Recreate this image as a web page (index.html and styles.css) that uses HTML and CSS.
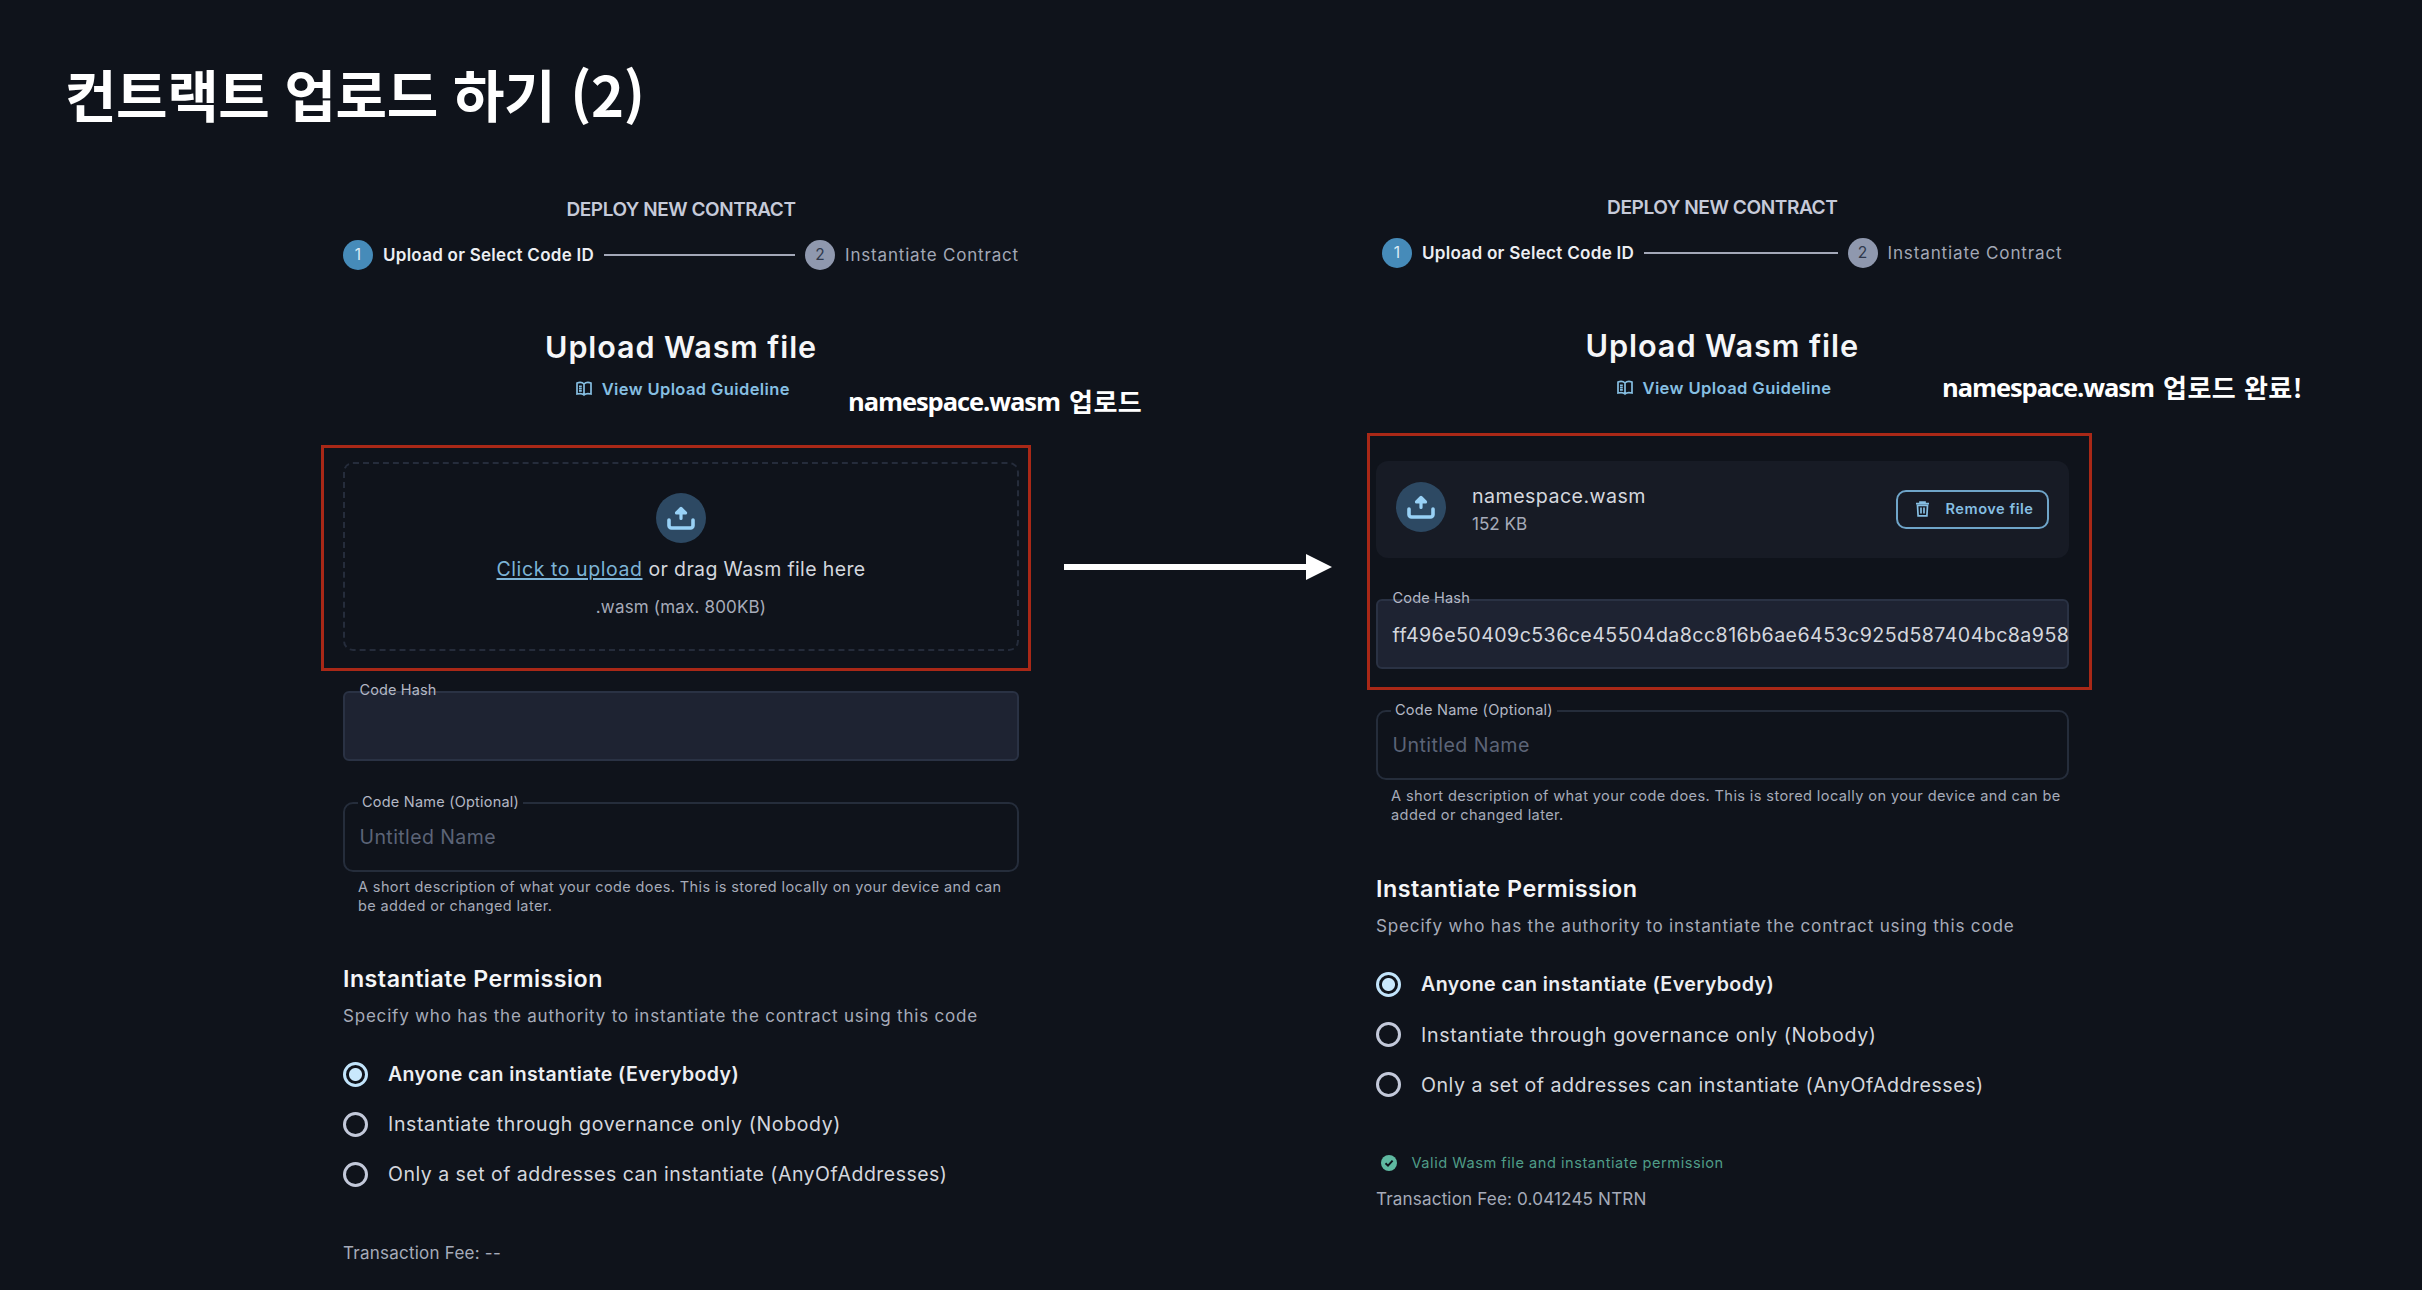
FILE: index.html
```
<!DOCTYPE html>
<html lang="ko">
<head>
<meta charset="utf-8">
<title>컨트랙트 업로드 하기 (2)</title>
<link rel="stylesheet" href="styles.css">
</head>
<body>
<svg width="0" height="0" class="sprite">
  <symbol id="upload" viewBox="0 0 28 24">
    <path d="M2 14v5.500a2.500 2.500 0 0 0 2.500 2.500h19a2.500 2.500 0 0 0 2.500-2.500V14" fill="none" stroke="currentColor" stroke-width="3.600" stroke-linecap="round" stroke-linejoin="round"/>
    <path d="M14 12.500V5M9.500 7 14 2.500 18.500 7z" fill="currentColor" stroke="currentColor" stroke-width="3.200" stroke-linecap="round" stroke-linejoin="round"/>
  </symbol>
  <symbol id="book" viewBox="0 0 16 16">
    <path d="M8 3C6.500 1.500 3.500 1.200 1 2v11c2.500-.7 5.500-.5 7 1 1.500-1.500 4.500-1.700 7-1V2c-2.500-.8-5.500-.5-7 1zM8 3v11M3 5.300h2.800M3 7.600h2.800M3 9.900h2.800" fill="none" stroke="currentColor" stroke-width="1.700"/>
  </symbol>
  <symbol id="trash" viewBox="0 0 14 16">
    <path d="M.5 2.700h13M4.500 2V1h5v1M2 4.500l.6 10.300h8.800L12 4.500zM5.500 6.500v6M8.500 6.500v6" fill="none" stroke="currentColor" stroke-width="1.700"/>
  </symbol>
  <symbol id="check" viewBox="0 0 16 16">
    <circle cx="8" cy="8" r="8" fill="currentColor"/>
    <path d="M4.500 8.300 7 10.700l4.600-5" fill="none" stroke="#0f131b" stroke-width="1.900"/>
  </symbol>
</svg>

<main class="slide">
  <h1 class="slide-title">컨트랙트 업로드 하기 (2)</h1>

  <div class="panels">
    <section class="panel">
      <div class="deploy">DEPLOY NEW CONTRACT</div>
      <div class="stepper">
        <span class="num num-on">1</span><span class="step step-on">Upload or Select Code ID</span>
        <span class="rule"></span>
        <span class="num">2</span><span class="step">Instantiate Contract</span>
      </div>
      <h2 class="heading">Upload Wasm file</h2>
      <div class="guide"><svg class="guide-icon"><use href="#book"/></svg><span class="guide-text">View Upload Guideline</span></div>

      <div class="dropzone">
        <span class="disc"><svg class="disc-icon"><use href="#upload"/></svg></span>
        <div class="drop-line"><a class="click">Click to upload</a><span class="drag">or drag Wasm file here</span></div>
        <div class="limit">.wasm (max. 800KB)</div>
      </div>

      <div class="field field-hash"><span class="label label-hash">Code Hash</span></div>
      <div class="field field-name"><span class="label label-name">Code Name (Optional)</span><span class="placeholder">Untitled Name</span></div>
      <p class="helper">A short description of what your code does. This is stored locally on your device and can<br>be added or changed later.</p>

      <h3 class="permission">Instantiate Permission</h3>
      <div class="specify">Specify who has the authority to instantiate the contract using this code</div>
      <div class="options">
        <div class="option"><span class="radio radio-on"></span><span class="opt opt-a">Anyone can instantiate (Everybody)</span></div>
        <div class="option"><span class="radio"></span><span class="opt opt-b">Instantiate through governance only (Nobody)</span></div>
        <div class="option"><span class="radio"></span><span class="opt opt-c">Only a set of addresses can instantiate (AnyOfAddresses)</span></div>
      </div>
      <div class="fee">Transaction Fee: --</div>
    </section>

    <section class="panel panel-done">
      <div class="deploy">DEPLOY NEW CONTRACT</div>
      <div class="stepper">
        <span class="num num-on">1</span><span class="step step-on">Upload or Select Code ID</span>
        <span class="rule"></span>
        <span class="num">2</span><span class="step">Instantiate Contract</span>
      </div>
      <h2 class="heading">Upload Wasm file</h2>
      <div class="guide"><svg class="guide-icon"><use href="#book"/></svg><span class="guide-text">View Upload Guideline</span></div>

      <div class="file">
        <span class="disc"><svg class="disc-icon"><use href="#upload"/></svg></span>
        <div class="file-info"><div class="file-name">namespace.wasm</div><div class="file-size">152 KB</div></div>
        <div class="remove"><svg class="remove-icon"><use href="#trash"/></svg><span class="remove-text">Remove file</span></div>
      </div>

      <div class="field field-hash"><span class="label label-hash">Code Hash</span><span class="hash">ff496e50409c536ce45504da8cc816b6ae6453c925d587404bc8a958</span></div>
      <div class="field field-name"><span class="label label-name">Code Name (Optional)</span><span class="placeholder">Untitled Name</span></div>
      <p class="helper">A short description of what your code does. This is stored locally on your device and can be<br>added or changed later.</p>

      <h3 class="permission">Instantiate Permission</h3>
      <div class="specify">Specify who has the authority to instantiate the contract using this code</div>
      <div class="options">
        <div class="option"><span class="radio radio-on"></span><span class="opt opt-a">Anyone can instantiate (Everybody)</span></div>
        <div class="option"><span class="radio"></span><span class="opt opt-b">Instantiate through governance only (Nobody)</span></div>
        <div class="option"><span class="radio"></span><span class="opt opt-c">Only a set of addresses can instantiate (AnyOfAddresses)</span></div>
      </div>
      <div class="valid"><svg class="valid-icon"><use href="#check"/></svg><span class="valid-text">Valid Wasm file and instantiate permission</span></div>
      <div class="fee fee-paid">Transaction Fee: 0.041245 NTRN</div>
    </section>
  </div>

  <div class="mark mark-left"></div>
  <div class="mark mark-right"></div>
  <div class="note note-left"><span class="note-file">namespace.wasm</span><span class="note-ko">업로드</span></div>
  <div class="note note-right"><span class="note-file">namespace.wasm</span><span class="note-ko">업로드 완료!</span></div>
  <svg class="arrow" viewBox="0 0 270 28"><path d="M1 11h242V1l26 13-26 13V17H1z" fill="#fff"/></svg>
</main>
</body>
</html>
```
FILE: styles.css
```
* { box-sizing: border-box; }
body { margin: 0; background: #0f131b; font-family: Inter, "Noto Sans CJK KR", sans-serif; }
h1, h2, h3, p { margin: 0; }
.sprite { position: absolute; }

.slide { position: relative; width: 2422px; height: 1290px; overflow: hidden; padding-top: 63px; white-space: nowrap; color: #d4d7de; }
.slide-title { height: 60px; padding-left: 65px; font: 700 56px/60px "Noto Sans CJK KR", sans-serif; letter-spacing: -.008em; color: #fff; }

.panels { display: flex; gap: 357px; padding: 75px 0 0 343px; }
.panel { width: 676px; font-size: 10px; display: flex; flex-direction: column; }
.panel-done { width: 692.5px; font-size: 10.06px; margin-top: -3px; }

.deploy { align-self: center; font-size: 1.9em; font-weight: 600; line-height: 24px; letter-spacing: -.0237em; color: #c6cad9; }
.stepper { display: flex; align-items: center; height: 30px; margin-top: 17.5px; }
.panel-done .stepper { padding: 0 6px; margin-top: 18.5px; }
.num { width: 30px; height: 30px; border-radius: 50%; background: #8f98ae; color: #30384c; font-size: 1.55em; line-height: 30px; text-align: center; }
.num-on { background: #468bb9; color: #dcecf6; }
.step { margin-left: 10px; font-size: 1.7em; letter-spacing: .0483em; color: #a3a8b6; }
.step-on { font-weight: 600; letter-spacing: .0154em; color: #eceef2; }
.rule { flex: 1; height: 2px; margin: 0 10px; background: #a3a8b8; }
.heading { align-self: center; margin-top: 57.5px; font-size: 3.05em; line-height: 40px; font-weight: 600; letter-spacing: .0297em; color: #f5f6f8; }
.panel-done .heading { margin-top: 58.5px; }
.guide { align-self: center; display: flex; align-items: center; height: 20px; margin-top: 12px; padding-left: 4px; color: #86bfe2; }
.guide-icon { width: 16px; height: 16px; margin-right: 9.5px; }
.guide-text { font-size: 1.65em; font-weight: 600; letter-spacing: .0235em; }

.dropzone { height: 189px; margin-top: 63px; border: 2px dashed #252c3b; border-radius: 10px; display: flex; flex-direction: column; align-items: center; padding-top: 29px; }
.disc { flex: none; width: 50px; height: 50px; border-radius: 50%; background: #2d4963; color: #98d1f6; display: flex; align-items: center; justify-content: center; }
.disc-icon { width: 28px; height: 24px; }
.drop-line { display: flex; align-items: center; gap: 6px; height: 24px; margin-top: 14px; font-size: 1.95em; }
.click { color: #7db4d6; letter-spacing: .0295em; text-decoration: underline 2px; text-underline-offset: 2px; }
.drag { letter-spacing: .0186em; }
.limit { margin-top: 16px; font-size: 1.7em; line-height: 20px; letter-spacing: .0104em; color: #a6abb9; }

.file { display: flex; align-items: center; height: 97px; margin-top: 62.5px; padding: 0 20px 0 19.5px; border-radius: 12px; background: #171b25; }
.file .disc { margin-top: -5px; }
.file-info { flex: 1; margin: 4px 0 0 26.5px; }
.file-name { font-size: 1.95em; line-height: 26px; letter-spacing: .0231em; }
.file-size { font-size: 1.7em; line-height: 30px; color: #a6abb9; }
.remove { display: flex; align-items: center; width: 152.5px; height: 39px; padding-left: 17px; border: 2px solid #6fa5c9; border-radius: 10px; color: #86bfe2; }
.remove-icon { width: 15px; height: 16px; margin-right: 15.5px; }
.remove-text { font-size: 1.45em; font-weight: 600; letter-spacing: .0356em; }

.field { position: relative; display: flex; align-items: center; height: 70px; padding: 0 0 0 14.5px; border: 2px solid #252d3b; border-radius: 10px; }
.field-hash { margin-top: 40px; border-color: #2a3244; border-radius: 6px; background: #1e2332; }
.field-name { margin-top: 41px; }
.panel-done .field-hash { margin-top: 41px; }
.label { position: absolute; top: -13px; font-size: 1.45em; line-height: 20px; color: #b4b8c5; }
.label-hash { left: 14.5px; letter-spacing: .0089em; }
.label-name { top: -12px; left: 13px; padding: 0 4px; letter-spacing: .0148em; background: #0f131b; }
.placeholder { font-size: 1.95em; letter-spacing: .0212em; color: #5c6477; }
.hash { padding-top: 2px; font-size: 1.95em; letter-spacing: .0218em; }
.helper { margin: 4.5px 0 0 15px; font-size: 1.45em; line-height: 19.5px; letter-spacing: .0264em; color: #a6abb9; }
.panel-done .helper { margin-top: 7px; }

.permission { margin-top: 48.5px; font-size: 2.32em; line-height: 30px; font-weight: 600; letter-spacing: .0215em; color: #f5f6f8; }
.specify { margin-top: 12px; font-size: 1.7em; line-height: 20px; letter-spacing: .047em; color: #a6abb9; }
.panel-done .permission { margin-top: 48px; }
.panel-done .specify { margin-top: 12.5px; }
.options { margin-top: 23px; }
.option { display: flex; align-items: center; height: 50px; gap: 20px; }
.panel-done .option { height: 50.4px; }
.radio { width: 25px; height: 25px; border: 3px solid #c3c9da; border-radius: 50%; }
.radio-on { border-color: #c2e4fb; background: radial-gradient(circle, #c9e8fc 6px, transparent 7px); }
.opt { font-size: 1.95em; }
.opt-a { font-weight: 600; letter-spacing: .0205em; color: #eceef2; }
.opt-b { letter-spacing: .033em; }
.opt-c { letter-spacing: .025em; }
.fee { margin-top: 43.5px; font-size: 1.7em; line-height: 20px; letter-spacing: .0141em; color: #a6abb9; }
.valid { display: flex; align-items: center; height: 20px; margin-top: 42.5px; padding-left: 4.5px; color: #5fb9a1; }
.valid-icon { width: 16px; height: 16px; margin-right: 15px; }
.valid-text { font-size: 1.45em; letter-spacing: .0366em; color: #4f9d88; }
.fee-paid { margin-top: 16px; letter-spacing: .0087em; }

.mark { position: absolute; border: 3px solid #a92817; }
.mark-left { left: 321px; top: 445px; width: 710px; height: 226px; }
.mark-right { left: 1367px; top: 433px; width: 725px; height: 257px; }
.note { position: absolute; display: flex; align-items: center; gap: 9px; height: 32px; color: #fff; }
.note-left { left: 848px; top: 385px; }
.note-right { left: 1942px; top: 371px; }
.note-file { font: 700 25.5px/32px "Open Sans", sans-serif; letter-spacing: -.042em; width: 212px; }
.note-ko { font: 700 26px/32px "Noto Sans CJK KR", sans-serif; letter-spacing: .018em; }
.arrow { position: absolute; left: 1063px; top: 553px; width: 270px; height: 28px; }
```
